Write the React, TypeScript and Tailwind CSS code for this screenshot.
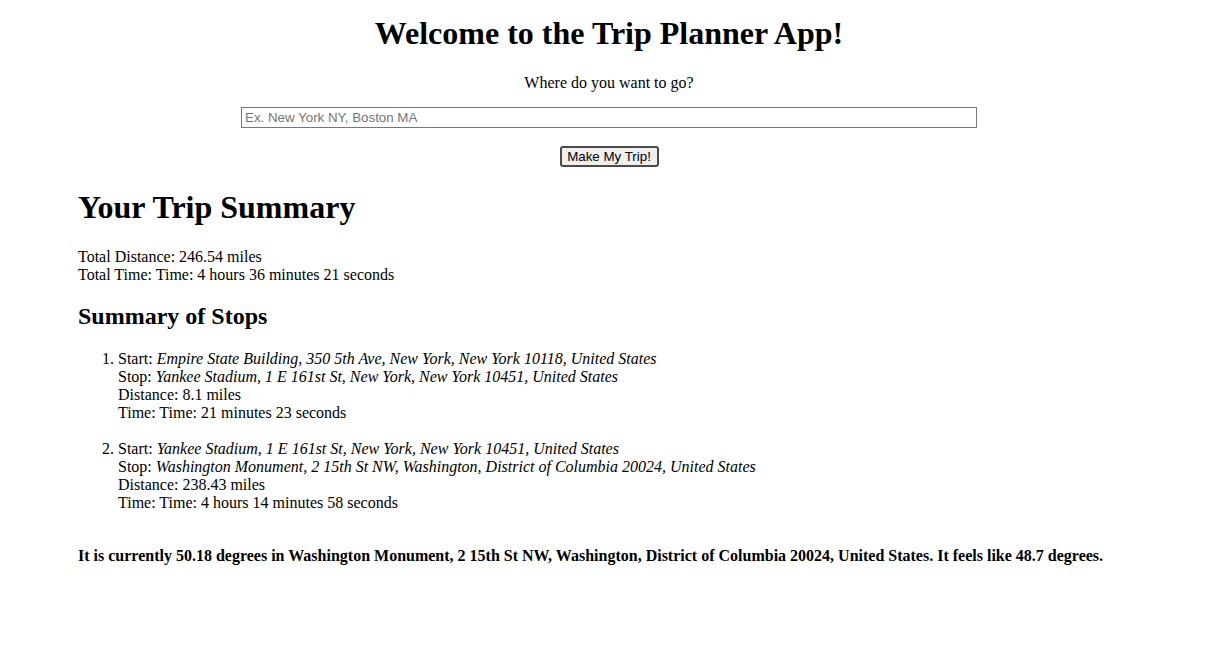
import React from "react";

const stops = [
  {
    start: "Empire State Building, 350 5th Ave, New York, New York 10118, United States",
    stop: "Yankee Stadium, 1 E 161st St, New York, New York 10451, United States",
    distance: "8.1 miles",
    time: "Time: 21 minutes 23 seconds",
  },
  {
    start: "Yankee Stadium, 1 E 161st St, New York, New York 10451, United States",
    stop: "Washington Monument, 2 15th St NW, Washington, District of Columbia 20024, United States",
    distance: "238.43 miles",
    time: "Time: 4 hours 14 minutes 58 seconds",
  },
];

export default function App() {
  return (
    <div className="min-h-[662px] w-full bg-white text-black font-['Liberation_Serif',serif]">
      <div className="ml-[78px] w-[1062px] pt-[15px] pb-[80px]">
        <div className="flex flex-col items-center">
          <h1 className="text-[32px] leading-[37px] font-bold">Welcome to the Trip Planner App!</h1>
          <p className="mt-[22px] text-[16px] leading-[18px]">Where do you want to go?</p>
          <input
            type="text"
            placeholder="Ex. New York NY, Boston MA"
            className="mt-[15px] w-[736px] h-[21px] border border-[#767676] px-[3px] py-0 font-['Liberation_Sans',Arial,sans-serif] text-[13.33px] leading-[15px] text-black placeholder:text-[#757575] outline-none bg-white"
          />
          <button
            type="button"
            className="mt-[18px] w-[99px] h-[21px] rounded-[3px] border-2 border-[#4a4a4a] bg-[#efefef] font-['Liberation_Sans',Arial,sans-serif] text-[13.33px] leading-[15px] text-black flex items-center justify-center p-0"
          >
            Make My Trip!
          </button>
        </div>

        <h2 className="mt-[22px] text-[32px] leading-[37px] font-bold">Your Trip Summary</h2>
        <div className="mt-[22px] text-[16px] leading-[18px]">
          <div>Total Distance: 246.54 miles</div>
          <div>Total Time: Time: 4 hours 36 minutes 21 seconds</div>
        </div>

        <h3 className="mt-[18px] text-[24px] leading-[28px] font-bold">Summary of Stops</h3>
        <ol className="mt-[20px] list-decimal pl-[40px] text-[16px] leading-[18px] flex flex-col gap-[18px]">
          {stops.map((s, i) => (
            <li key={i}>
              <div>
                Start: <em className="italic">{s.start}</em>
              </div>
              <div>
                Stop: <em className="italic">{s.stop}</em>
              </div>
              <div>Distance: {s.distance}</div>
              <div>Time: {s.time}</div>
            </li>
          ))}
        </ol>

        <p className="mt-[35px] text-[16px] leading-[18px] font-bold">
          It is currently 50.18 degrees in Washington Monument, 2 15th St NW, Washington, District of Columbia 20024, United States. It feels like 48.7 degrees.
        </p>
      </div>
    </div>
  );
}
